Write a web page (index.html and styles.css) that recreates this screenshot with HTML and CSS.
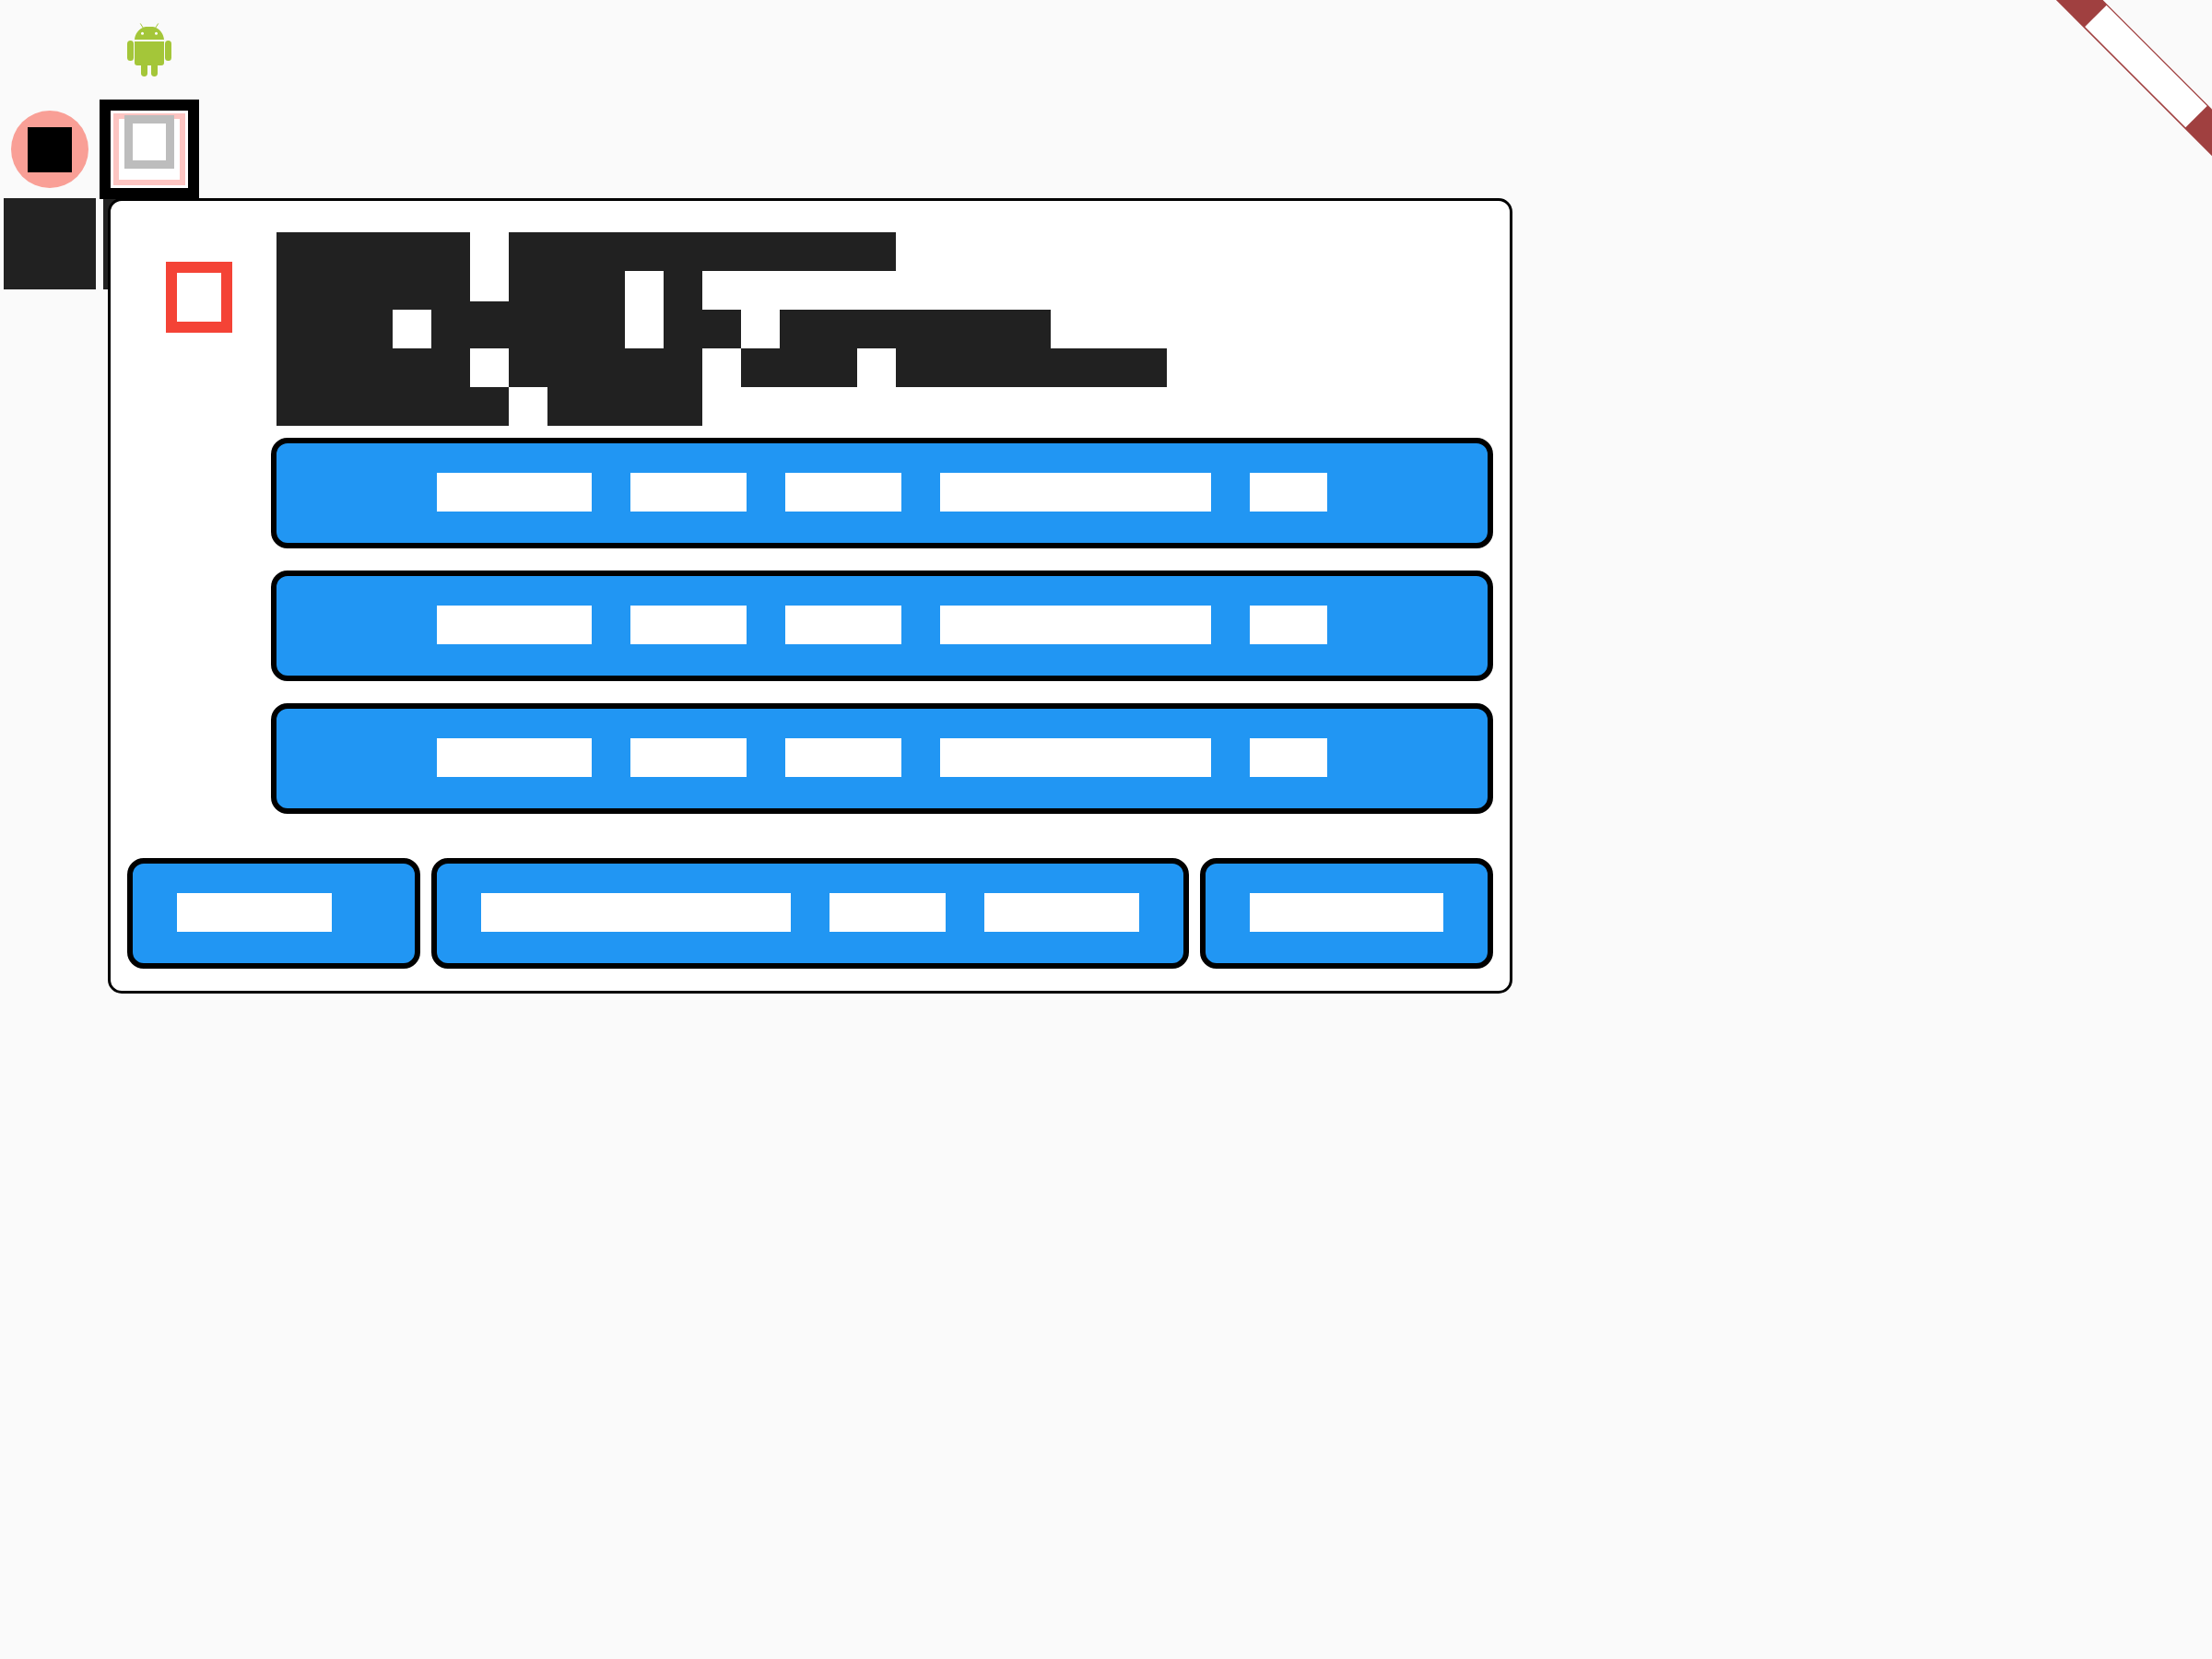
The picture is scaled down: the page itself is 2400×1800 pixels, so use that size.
FILE: index.html
```html
<!DOCTYPE html>
<html lang="en">
<head>
<meta charset="utf-8">
<title>Dialog</title>
<link rel="stylesheet" href="styles.css">
</head>
<body>
<main class="board">
  <svg class="robot" width="48" height="58" viewBox="0 0 48 58" aria-hidden="true">
    <g fill="#a4c639">
      <path d="M8 18C8.500 12 12 7 18 4.500Q19 4 20 4H28Q29 4 30 4.500C36 7 39.500 12 40 18Z"/>
      <path d="M8 20H40V43Q40 46 37 46H33V54.500A3.500 3.500 0 0 1 26 54.500V46H22V54.500A3.500 3.500 0 0 1 15 54.500V46H11Q8 46 8 43Z"/>
      <rect x="0" y="19" width="7" height="22" rx="3.500"/>
      <rect x="41" y="19" width="7" height="22" rx="3.500"/>
    </g>
    <path d="M14.500 .8L17.500 5.500M33.500 .8L30.500 5.500" stroke="#a4c639" stroke-width="1" fill="none" stroke-linecap="round"/>
    <circle cx="16.500" cy="11.300" r="1.500" fill="#fff"/>
    <circle cx="31.500" cy="11.300" r="1.500" fill="#fff"/>
  </svg>
  <div class="disc"><span class="disc-mark"></span></div>
  <div class="frame"><div class="frame-ring"><span class="frame-glyph"></span></div></div>
  <div class="tile tile-first"></div>
  <div class="tile tile-second"></div>

  <section class="card">
    <div class="card-body">
      <span class="alert-icon"></span>
      <div class="content">
        <div class="message">
          <div class="line"><i class="w5"></i><i class="w10"></i></div>
          <div class="line tight"><i class="w5"></i><i class="w1 low"></i><i class="w3"></i><i class="w1 blank"></i><i class="w1"></i></div>
          <div class="line"><i class="w3"></i><i class="w5"></i><i class="w2"></i><i class="w7"></i></div>
          <div class="line"><i class="w5"></i><i class="w5"></i><i class="w3"></i><i class="w7"></i></div>
          <div class="line"><i class="w6"></i><i class="w4"></i></div>
        </div>
        <div class="options">
          <button class="button" type="button" aria-label="Option 1"><i class="w4"></i><i class="w3"></i><i class="w3"></i><i class="w7"></i><i class="w2"></i></button>
          <button class="button" type="button" aria-label="Option 2"><i class="w4"></i><i class="w3"></i><i class="w3"></i><i class="w7"></i><i class="w2"></i></button>
          <button class="button" type="button" aria-label="Option 3"><i class="w4"></i><i class="w3"></i><i class="w3"></i><i class="w7"></i><i class="w2"></i></button>
        </div>
      </div>
    </div>
    <div class="actions">
      <button class="button short" type="button" aria-label="Action 1"><i class="w4"></i></button>
      <button class="button" type="button" aria-label="Action 2"><i class="w8"></i><i class="w3"></i><i class="w4"></i></button>
      <button class="button" type="button" aria-label="Action 3"><i class="w5"></i></button>
    </div>
  </section>
</main>
<svg class="ribbon" width="170" height="170" viewBox="0 0 170 170" aria-hidden="true">
  <path d="M.8 0H51.600L170 118.400V169.200Z" fill="#a04040"/>
  <path d="M32.100 29.100L55.500 5.700L164.700 114.900L141.300 138.300Z" fill="#fff"/>
</svg>
</body>
</html>
```
FILE: styles.css
```css
* { box-sizing: border-box; }

body {
  --cell: 42px;
  margin: 0;
  min-height: 100vh;
  background: #fafafa;
  font-family: Roboto, sans-serif;
}

.board {
  display: grid;
  grid-template-columns: 108px 108px 1fr;
  grid-template-rows: 108px 107px auto;
  align-items: start;
}

.robot { grid-area: 1 / 2; place-self: center; }

.disc {
  grid-area: 2 / 1;
  justify-self: center;
  display: grid;
  place-items: center;
  width: 84px;
  height: 84px;
  margin-top: 12px;
  border-radius: 50%;
  background: #f99f96;
}
.disc-mark { width: 48px; height: 49px; background: #000; }

.frame {
  grid-area: 2 / 2;
  z-index: 2;
  width: 108px;
  height: 108px;
  padding: 3px;
  border: 12px solid #000;
  background: #fff;
}
.frame-ring {
  display: flex;
  justify-content: center;
  height: 78px;
  background: #fff;
  border: 6px solid #fdc5c2;
}
.frame-glyph {
  width: 54px;
  height: 58px;
  margin-top: -4px;
  border: 9px solid #bdbdbd;
}

.tile { height: 99px; background: #212121; }
.tile-first { grid-area: 3 / 1; margin: 0 4px; }
.tile-second { grid-area: 3 / 2; margin: 0 4px; }

.card {
  grid-area: 3 / 2 / 4 / 4;
  justify-self: start;
  z-index: 1;
  margin-left: 9px;
  padding: 34px 18px 24px;
  border: 3px solid #000;
  border-radius: 15px;
  background: #fff;
}
.card-body { display: flex; align-items: flex-start; gap: 42px; }
.alert-icon {
  flex: none;
  width: 72px;
  height: 77px;
  margin: 32px 0 0 42px;
  border: 12px solid #f44336;
}
.content { flex: 1; }
.message { padding: 0 6px 13px; }

/* every block is a whole number of character cells wide */
i { flex: none; height: var(--cell); width: calc(var(--n) * var(--cell)); background: currentColor; }
.w1 { --n: 1; }
.w2 { --n: 2; }
.w3 { --n: 3; }
.w4 { --n: 4; }
.w5 { --n: 5; }
.w6 { --n: 6; }
.w7 { --n: 7; }
.w8 { --n: 8; }
.w10 { --n: 10; }

.line { display: flex; align-items: flex-end; gap: var(--cell); color: #212121; }
.tight { gap: 0; }
.low { height: 9px; }
.blank { visibility: hidden; }

.options { display: flex; flex-direction: column; gap: 24px; }
.actions { display: flex; gap: 12px; margin-top: 48px; }

.button {
  display: flex;
  justify-content: center;
  gap: var(--cell);
  height: 120px;
  padding: 32px 48px;
  border: 6px solid #000;
  border-radius: 18px;
  background: #2196f3;
  color: #fff;
}
.short { justify-content: flex-start; padding-right: 90px; }

.ribbon { position: absolute; top: 0; right: 0; }
```
